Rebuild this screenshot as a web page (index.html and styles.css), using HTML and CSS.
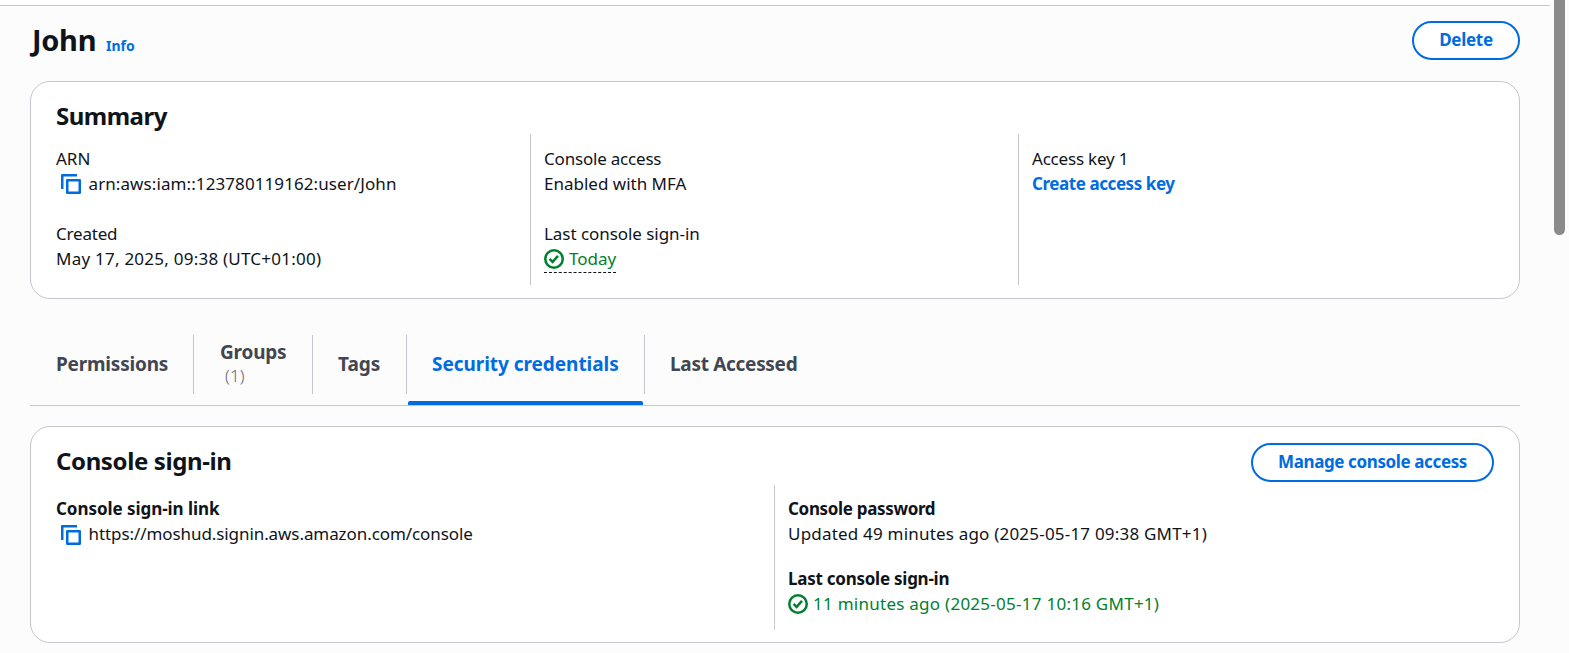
FILE: index.html
```html
<!DOCTYPE html>
<html lang="en">
<head>
<meta charset="utf-8">
<title>John | IAM</title>
<link rel="stylesheet" href="styles.css">
</head>
<body>
<svg class="sprite" width="0" height="0">
  <symbol id="copy" viewBox="0 0 20 20"><path d="M1.25 15V1.25H16M6.25 6.25h12.5v12.5H6.25z" fill="none" stroke="currentColor" stroke-width="2.5" stroke-linejoin="round"/></symbol>
  <symbol id="check" viewBox="0 0 20 20"><circle cx="10" cy="10" r="8.75" fill="none" stroke="currentColor" stroke-width="2.5"/><path d="M5.6 9.9l3 3 5.4-6" fill="none" stroke="currentColor" stroke-width="2.5"/></symbol>
</svg>
<div class="topbar"></div>
<div class="scrollbar"></div>
<main class="page">
  <header class="page-header">
    <h1 class="title">John</h1>
    <a class="info">Info</a>
    <button class="btn btn-delete">Delete</button>
  </header>

  <section class="card summary">
    <h2 class="card-title">Summary</h2>
    <div class="cols cols-3">
      <div class="col">
        <div class="pair"><div><span class="t-arn">ARN</span></div><div class="copy-row"><svg class="icon"><use href="#copy"/></svg><span class="t-arnval">arn:aws:iam::123780119162:user/John</span></div></div>
        <div class="pair"><div>Created</div><div><span class="t-date">May 17, 2025, 09:38 (UTC+01:00)</span></div></div>
      </div>
      <div class="col">
        <div class="pair"><div>Console access</div><div><span class="t-mfa">Enabled with MFA</span></div></div>
        <div class="pair"><div><span class="t-last">Last console sign-in</span></div><div class="status today"><svg class="icon"><use href="#check"/></svg><span class="t-today">Today</span></div></div>
      </div>
      <div class="col">
        <div class="pair"><div>Access key 1</div><div><a class="link">Create access key</a></div></div>
      </div>
    </div>
  </section>

  <nav class="tabs">
    <div class="tab tab-permissions">Permissions</div>
    <div class="tab tab-groups"><span>Groups</span><span class="count">(1)</span></div>
    <div class="tab tab-tags">Tags</div>
    <div class="tab tab-security active">Security credentials</div>
    <div class="tab tab-last">Last Accessed</div>
  </nav>

  <section class="card signin">
    <div class="card-head">
      <h2 class="card-title">Console sign-in</h2>
      <button class="btn btn-manage">Manage console access</button>
    </div>
    <div class="cols cols-2">
      <div class="col">
        <div class="pair"><div class="label"><span class="t-link">Console sign-in link</span></div><div class="copy-row"><svg class="icon"><use href="#copy"/></svg><span class="t-url">https://moshud.signin.aws.amazon.com/console</span></div></div>
      </div>
      <div class="col">
        <div class="pair"><div class="label"><span class="t-pass">Console password</span></div><div><span class="t-updated">Updated 49 minutes ago (2025-05-17 09:38 GMT+1)</span></div></div>
        <div class="pair"><div class="label"><span class="t-last2">Last console sign-in</span></div><div class="status"><svg class="icon"><use href="#check"/></svg><span class="t-ago">11 minutes ago (2025-05-17 10:16 GMT+1)</span></div></div>
      </div>
    </div>
  </section>
</main>
</body>
</html>
```
FILE: styles.css
```css
* { box-sizing: border-box; }
body { margin: 0; height: 653px; overflow: hidden; background: #fcfcfd; color: #0f141a; font: 17px/25px "Noto Sans", "Open Sans", sans-serif; letter-spacing: -0.2px; white-space: nowrap; }
h1, h2 { margin: 0; font-weight: 700; }
.sprite { position: absolute; }
.topbar { width: 1550px; height: 6px; background: #fff; border-bottom: 1px solid #c6c6cd; }
.scrollbar { position: absolute; top: -8px; left: 1554px; width: 11px; height: 243px; border-radius: 6px; background: #8b8b8b; }
.page { width: 1490px; margin-left: 30px; }

.page-header { display: flex; height: 75px; padding-top: 15px; }
.title { font-size: 29px; line-height: 38px; width: 76px; padding-left: 2px; letter-spacing: -0.3px; }
.info { color: #006ce0; font-size: 14px; font-weight: 700; line-height: 20px; margin-top: 15px; letter-spacing: 0; }
.btn { height: 39px; padding: 0 0 2px; border: 2px solid #006ce0; border-radius: 20px; background: #fff; color: #006ce0; font: 700 17px/25px "Noto Sans", "Open Sans", sans-serif; letter-spacing: -0.3px; }
.btn-delete { width: 108px; margin-left: auto; }
.btn-manage { width: 243px; letter-spacing: -0.38px; }

.card { border: 1px solid #c6c6cd; border-radius: 20px; background: #fff; padding: 0 25px; }
.summary { height: 218px; padding-top: 20px; }
.summary .card-title { height: 32px; }
.card-title { font-size: 24px; line-height: 28px; letter-spacing: -0.5px; }
.cols { display: grid; }
.cols-3 { grid-template-columns: 474px 488px 1fr; height: 151px; }
.cols-2 { grid-template-columns: 718px 1fr; height: 145px; }
.col { display: flex; flex-direction: column; gap: 25px; padding-top: 12px; }
.cols-2 .col { gap: 20px; padding-top: 11px; }
.col + .col { border-left: 1px solid #c6c6cd; padding-left: 13px; }
.pair > div { height: 25px; }
.label { font-weight: 700; }
.icon { width: 20px; height: 20px; flex: none; }
.copy-row { display: flex; align-items: center; padding-left: 5px; gap: 7.5px; }
.copy-row .icon { color: #006ce0; margin-top: 1px; }
.signin .copy-row .icon { margin-top: 2px; }
.status { display: flex; align-items: center; gap: 5px; color: #00802f; }
.signin .status .icon { margin-top: 1px; }
.pair > .today { width: 72px; height: 27px; border-bottom: 1px dashed #0f141a; padding-bottom: 1px; }
.link { color: #006ce0; font-weight: 700; letter-spacing: -0.43px; }

/* Tracking tuned per run of text */
.t-arn { letter-spacing: 0; }
.t-arnval { letter-spacing: 0.09px; }
.t-date { letter-spacing: 0.24px; }
.t-mfa { letter-spacing: 0; }
.t-last, .t-link { letter-spacing: -0.05px; }
.t-today { letter-spacing: 0; }
.t-url { letter-spacing: -0.08px; }
.t-updated { letter-spacing: 0.2px; }
.t-ago { letter-spacing: 0.26px; }
.t-pass { letter-spacing: -0.33px; }
.t-last2 { letter-spacing: -0.25px; }

.tabs { display: flex; height: 71px; margin: 36px 0 20px; border-bottom: 1px solid #c6c6cd; color: #424650; font-size: 19px; font-weight: 700; letter-spacing: -0.2px; }
.tab { height: 59px; padding: 0 0 2px 25px; display: flex; flex-direction: column; justify-content: center; border-right: 1px solid #c6c6cd; line-height: 24px; }
.tab-permissions { width: 164px; padding-left: 26px; }
.tab-groups { width: 119px; padding-left: 26px; }
.tab-tags { width: 94px; letter-spacing: 0; }
.tab-security { width: 238px; letter-spacing: -0.05px; }
.tab-last { border: 0; letter-spacing: -0.3px; }
.count { font-size: 17px; font-weight: 300; color: #656871; padding-left: 5px; letter-spacing: 0.2px; }
.active { position: relative; color: #006ce0; }
.active::after { content: ""; position: absolute; left: 1px; right: 1px; top: 66px; height: 4px; background: #006ce0; border-radius: 2px 2px 0 0; }

.signin { height: 217px; padding-top: 16px; }
.card-head { display: flex; justify-content: space-between; height: 42px; }
.signin .card-title { padding-top: 4px; letter-spacing: -0.38px; }
```
